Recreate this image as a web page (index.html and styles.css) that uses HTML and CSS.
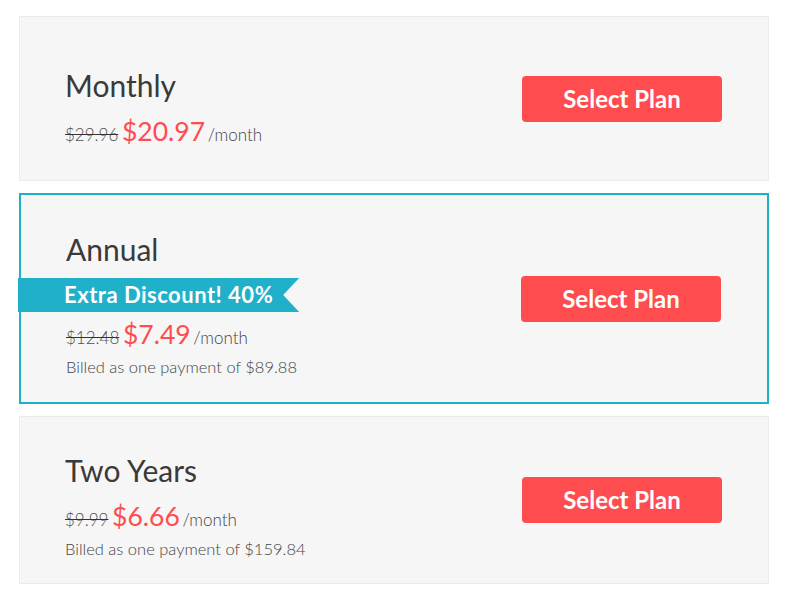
FILE: index.html
```html
<!DOCTYPE html>
<html lang="en">
<head>
  <meta charset="UTF-8">
  <meta name="viewport" content="width=device-width, initial-scale=1.0">
  <title>Choose a Plan</title>
  <link rel="stylesheet" href="styles.css">
</head>
<body>

<main class="plans">
  <!-- Monthly -->
  <div class="plan plan-short">
    <div class="plan-info">
      <h2>Monthly</h2>
      <p class="price"><s>$29.96</s> <span class="now">$20.97</span> /month</p>
    </div>
    <button class="select">Select Plan</button>
  </div>

  <!-- Annual -->
  <div class="plan plan-featured">
    <div class="plan-info">
      <h2>Annual</h2>
      <div class="ribbon">Extra Discount! 40%</div>
      <p class="price"><s>$12.48</s> <span class="now">$7.49</span> /month</p>
      <p class="billed">Billed as one payment of $89.88</p>
    </div>
    <button class="select">Select Plan</button>
  </div>

  <!-- Two Years -->
  <div class="plan">
    <div class="plan-info">
      <h2>Two Years</h2>
      <p class="price"><s>$9.99</s> <span class="now">$6.66</span> /month</p>
      <p class="billed">Billed as one payment of $159.84</p>
    </div>
    <button class="select">Select Plan</button>
  </div>
</main>

</body>
</html>
```

FILE: styles.css
```css
* {
  margin: 0;
  padding: 0;
  box-sizing: border-box;
}
body {
  font-family: 'Lato', 'Open Sans', sans-serif;
  background: #fff;
  color: #3b3b3b;
}
.plans {
  display: flex;
  flex-direction: column;
  gap: 12px;
  padding: 16px 19px;
}
.plan {
  display: flex;
  align-items: center;
  justify-content: space-between;
  background: #f6f6f6;
  border: 1px solid #ebebeb;
  padding: 0 46px 0 45px;
}
.plan-info {
  padding: 35px 0 22px;
}
.plan-short .plan-info {
  padding-top: 50px;
  padding-bottom: 30px;
}
.plan-featured {
  border: 2px solid #20b0c9;
}
.plan-featured .plan-info {
  padding-top: 36px;
  padding-bottom: 23px;
}
.plan h2 {
  font-size: 30px;
  font-weight: 400;
  line-height: 36px;
  color: #3a3a3a;
}
.price {
  margin-top: 15px;
  font-size: 17px;
  line-height: 30px;
  font-weight: 300;
  color: #444;
}
.price s {
  color: #505050;
  text-decoration-color: #333;
}
.price .now {
  margin: 0 -2px 0 -1px;
  font-size: 26.5px;
  line-height: 1;
  font-weight: 400;
  color: #ff4c4f;
}
.billed {
  margin-top: 2px;
  font-size: 16.5px;
  line-height: 24px;
  font-weight: 300;
  color: #444;
}
.ribbon {
  width: fit-content;
  margin: 11px 0 0 -48px;
  height: 34px;
  padding: 0 26px 0 46px;
  background: #20b0c9;
  color: #fff;
  font-size: 22px;
  font-weight: 700;
  letter-spacing: 0.5px;
  line-height: 34px;
  clip-path: polygon(0 0, 100% 0, calc(100% - 16px) 50%, 100% 100%, 0 100%);
}
.plan-featured .price {
  margin-top: 9px;
}
.select {
  width: 200px;
  height: 46px;
  border: none;
  border-radius: 4px;
  background: #ff4c4f;
  color: #fff;
  font-family: inherit;
  font-size: 24px;
  font-weight: 700;
  line-height: 46px;
  cursor: pointer;
}
.select:hover {
  background: #e84346;
}
```
